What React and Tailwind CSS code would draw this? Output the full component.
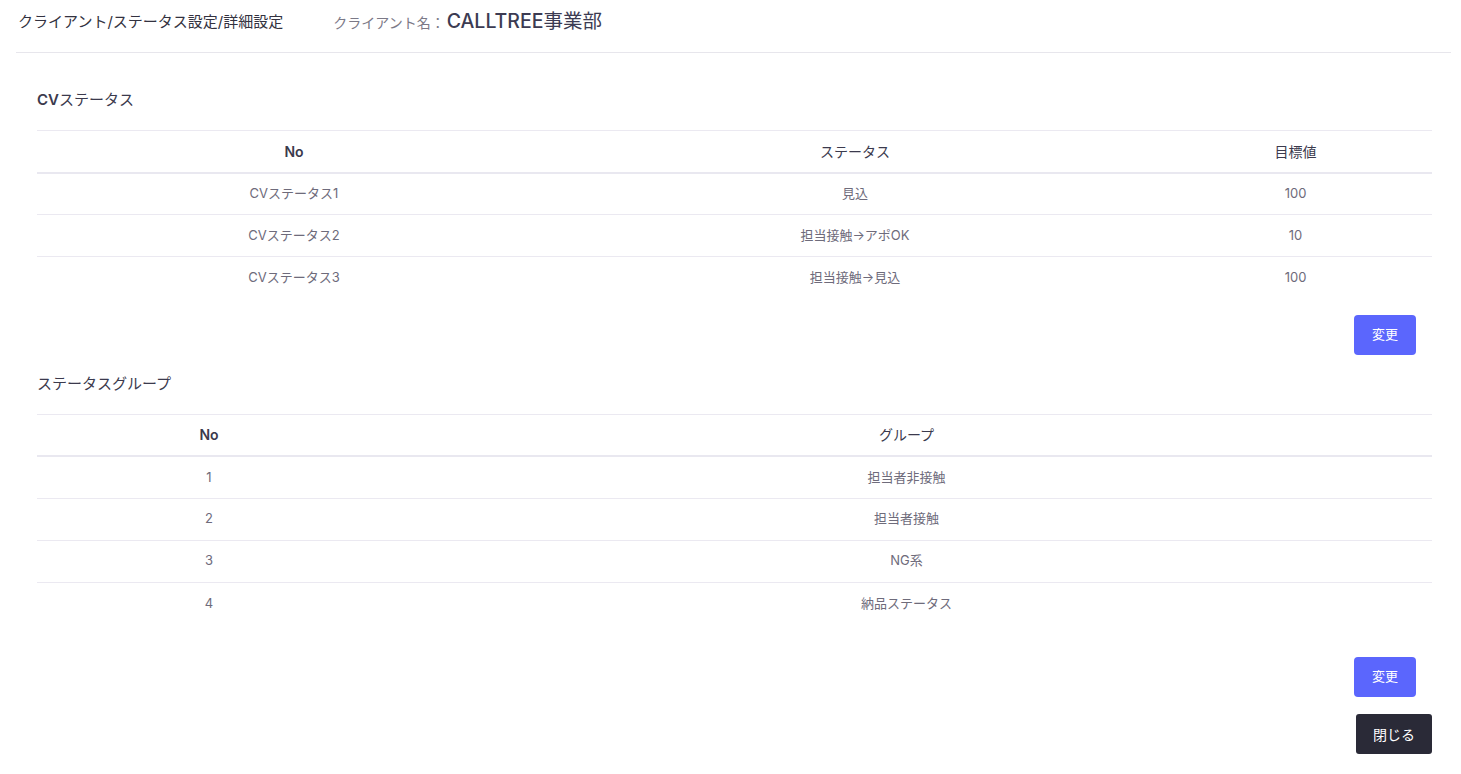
const cvRows = [
  { no: 'CVステータス1', status: '見込', target: '100' },
  { no: 'CVステータス2', status: '担当接触→アポOK', target: '10' },
  { no: 'CVステータス3', status: '担当接触→見込', target: '100' },
];

const groups = ['担当者非接触', '担当者接触', 'NG系', '納品ステータス'];

function ChangeButton() {
  return (
    <div className="flex justify-end pr-4">
      <button className="w-[62px] h-10 rounded bg-[#5b66fd] text-white text-[13px]">変更</button>
    </div>
  );
}

export default function App() {
  return (
    <div
      className="bg-white min-h-screen text-[#3b3a4d]"
      style={{ fontFamily: 'Inter, "Noto Sans CJK JP", sans-serif' }}
    >
      <div className="ml-4 mr-[10px] h-[53px] border-b border-[#e7e6ec] flex items-center pb-[8px]">
        <span className="ml-[2px] text-[15px] text-[#333240]">クライアント/ステータス設定/詳細設定</span>
        <span className="ml-[50px] text-[14px] text-[#7b7987]">クライアント名：</span>
        <span className="ml-[2px] text-[19.5px] text-[#3c3b52]"><span className="font-medium">CALLTREE</span>事業部</span>
      </div>

      <div className="ml-[37px] mr-[29px]">
        <h2 className="mt-[37px] h-5 leading-5 text-[15px] text-[#3b3a4d]">
          <span className="font-semibold">CV</span>ステータス
        </h2>
        <table className="mt-5 w-full border-t border-[#ebe9f1]">
          <thead>
            <tr className="h-[42px] border-b-2 border-[#e9e8f0] text-[14px] text-[#3b3a4d]">
              <th className="w-[514px] font-semibold">No</th>
              <th className="w-[608px] font-normal">ステータス</th>
              <th className="font-normal">目標値</th>
            </tr>
          </thead>
          <tbody className="text-[13px] text-[#6e6b7b]">
            {cvRows.map((r, i) => (
              <tr key={r.no} className={i < cvRows.length - 1 ? 'h-[42px] border-b border-[#ebe9f1]' : 'h-[42px]'}>
                <td className="text-center">{r.no}</td>
                <td className="text-center">{r.status}</td>
                <td className="text-center">{r.target}</td>
              </tr>
            ))}
          </tbody>
        </table>
        <div className="mt-4">
          <ChangeButton />
        </div>

        <h2 className="mt-[19px] h-5 leading-5 text-[15px] text-[#3b3a4d]">ステータスグループ</h2>
        <table className="mt-5 w-full border-t border-[#ebe9f1]">
          <thead>
            <tr className="h-[42px] border-b-2 border-[#e9e8f0] text-[14px] text-[#3b3a4d]">
              <th className="w-[344px] font-semibold">No</th>
              <th className="font-normal">グループ</th>
            </tr>
          </thead>
          <tbody className="text-[13px] text-[#6e6b7b]">
            {groups.map((g, i) => (
              <tr key={g} className={i < groups.length - 1 ? 'h-[42px] border-b border-[#ebe9f1]' : 'h-[42px]'}>
                <td className="text-center">{i + 1}</td>
                <td className="text-center">{g}</td>
              </tr>
            ))}
          </tbody>
        </table>
        <div className="mt-[33px]">
          <ChangeButton />
        </div>
        <div className="mt-[17px] flex justify-end">
          <button className="w-[76px] h-10 rounded-[3px] bg-[#2a2a37] text-white text-[14px]">閉じる</button>
        </div>
      </div>
    </div>
  );
}
